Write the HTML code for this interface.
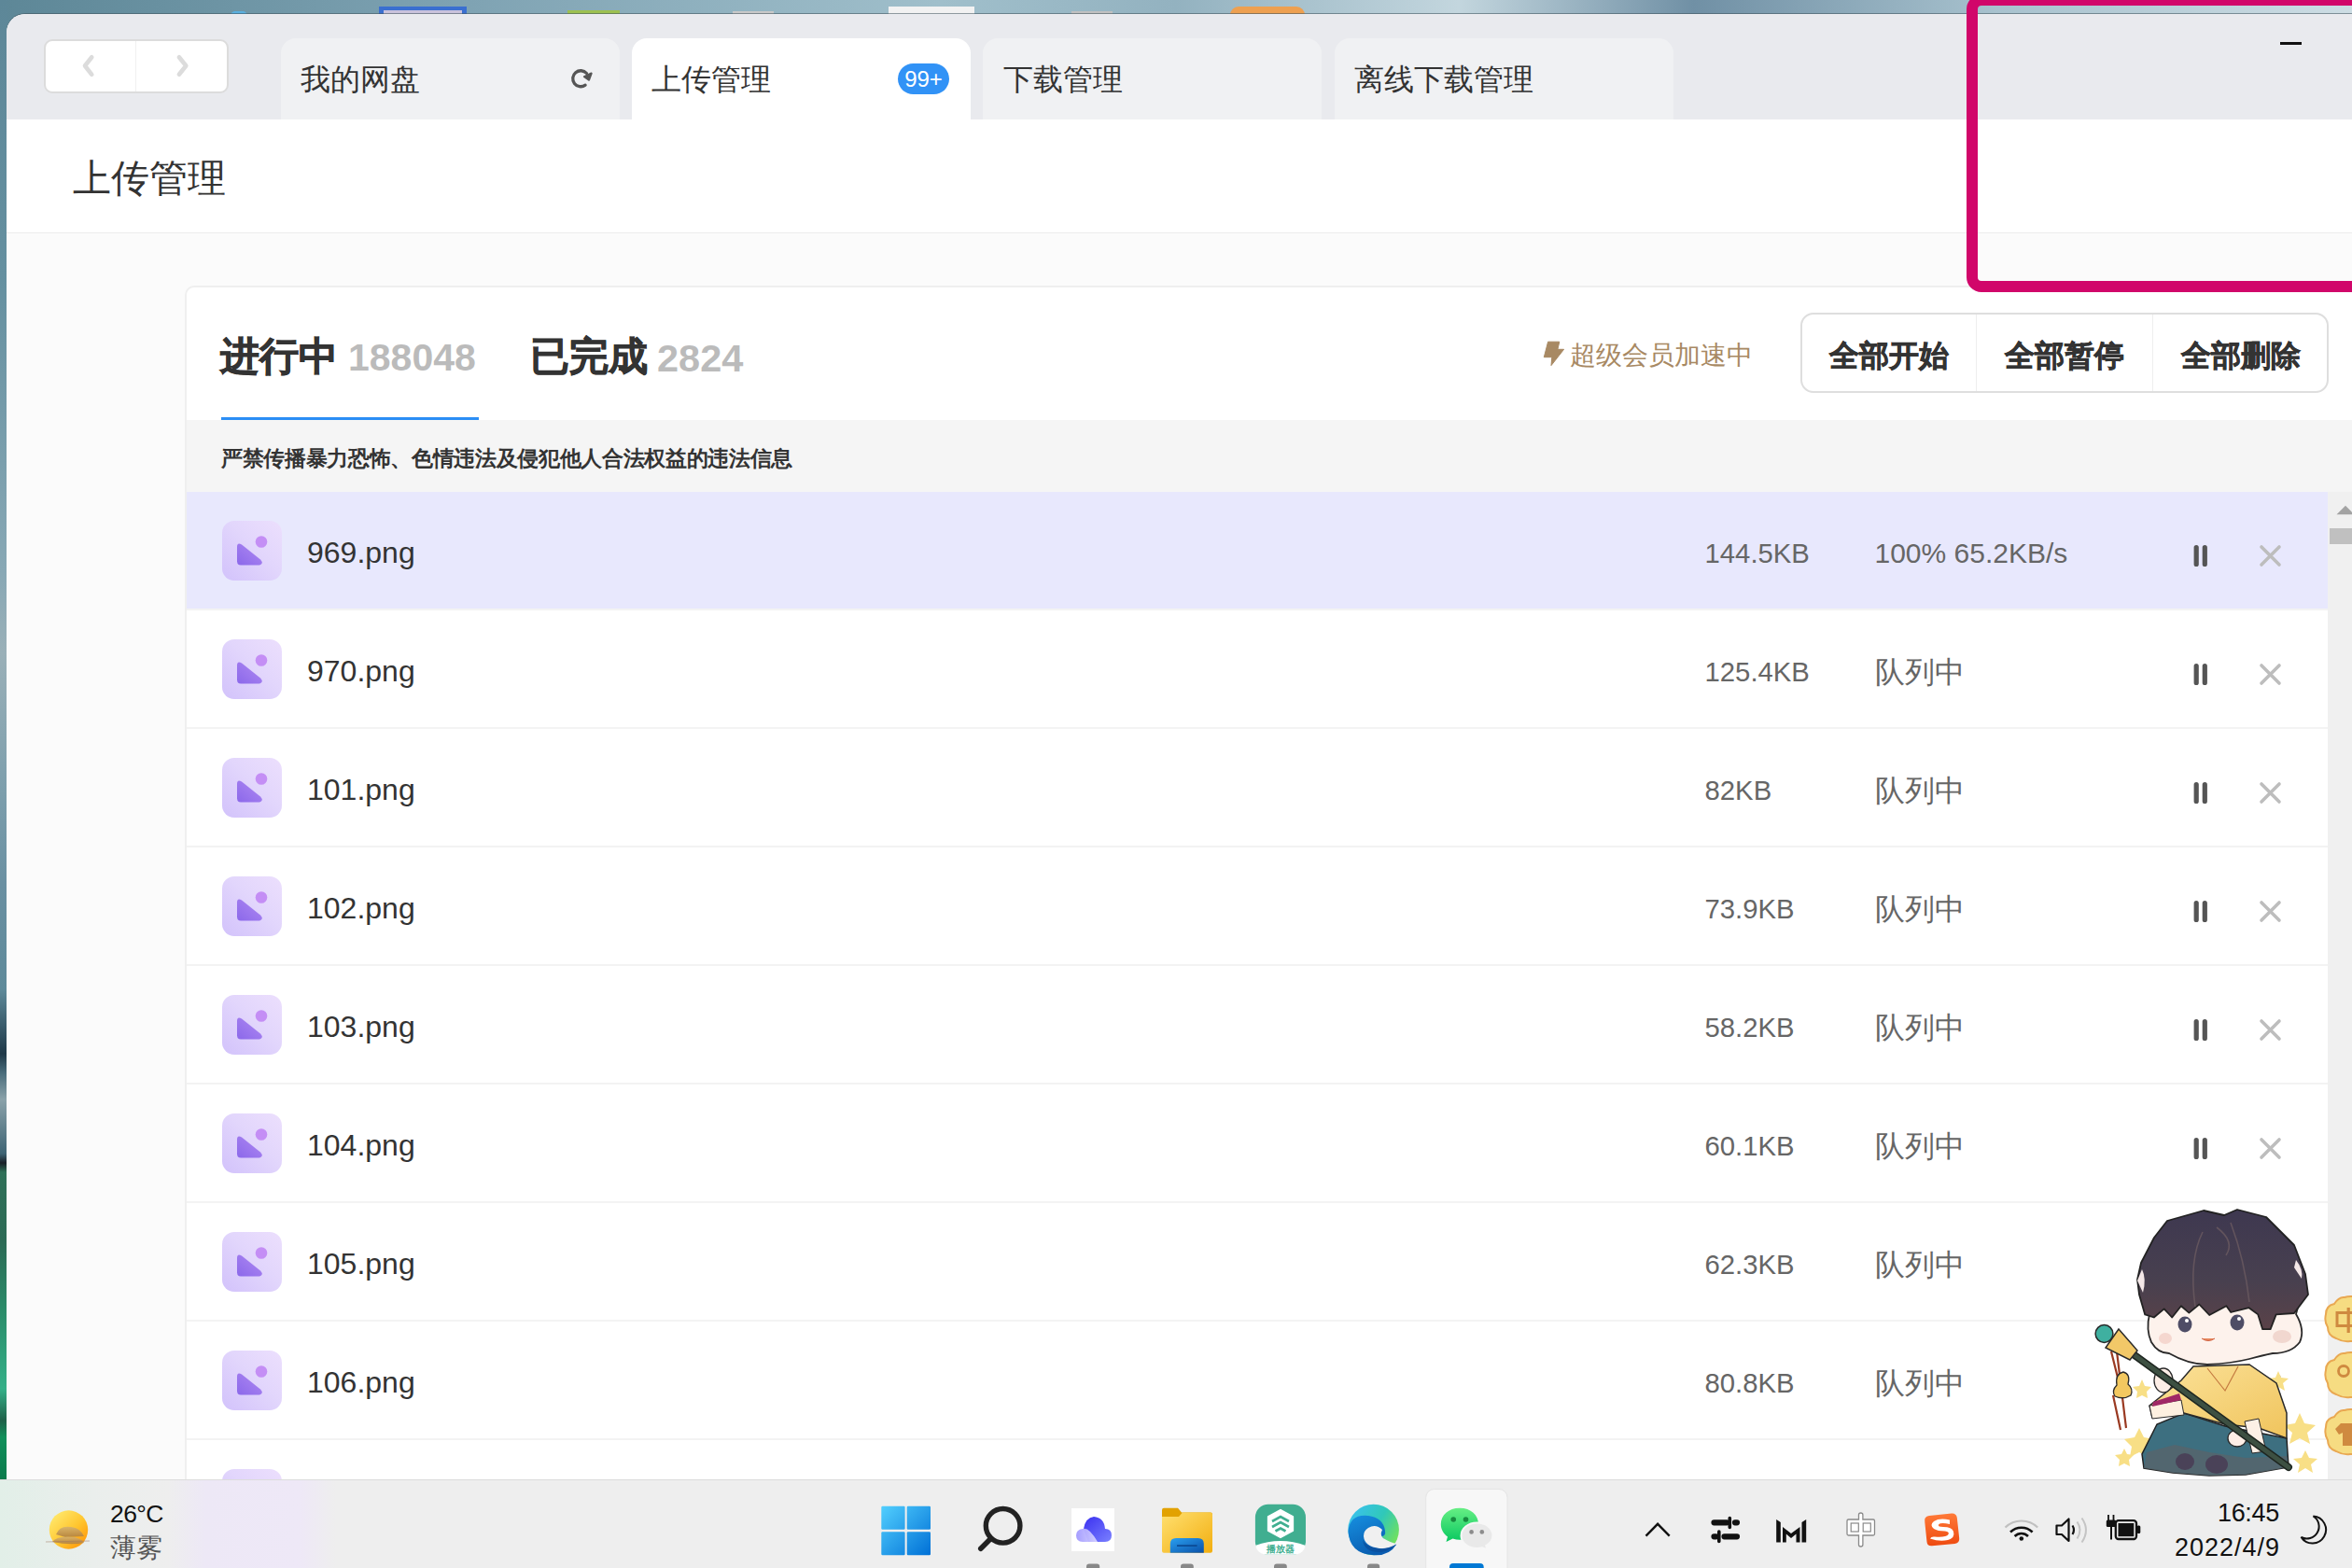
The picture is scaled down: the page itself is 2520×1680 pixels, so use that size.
<!DOCTYPE html>
<html><head><meta charset="utf-8">
<style>
*{box-sizing:border-box;margin:0;padding:0}
html,body{width:2520px;height:1680px;overflow:hidden}
body{position:relative;font-family:"Liberation Sans",sans-serif;color:#333;
 background:linear-gradient(90deg,#5d8797 0%,#7fa3b3 20%,#a0bfcb 40%,#93b2c0 50%,#c3d6de 62%,#7090a5 72%,#a8c2ce 85%,#cddde4 100%)}
.a{position:absolute}
.t{position:absolute;white-space:nowrap;line-height:1}
#leftstrip{left:0;top:0;width:8px;height:1585px;background:linear-gradient(180deg,#5d8798 0px,#6590a0 300px,#88a8b5 613px,#9ab0b8 700px,#7c9eac 850px,#6a90a2 948px,#5e8a9a 1060px,#1e3848 1129px,#4a6d7c 1150px,#8aa2aa 1178px,#3e6474 1236px,#1a2028 1246px,#2f7058 1256px,#2c6a55 1330px,#2a8a68 1400px,#34b088 1488px,#1e6048 1522px,#10905a 1540px,#0a7a4c 1585px)}
#win{left:7px;top:15px;width:2513px;height:1570px;background:#fbfbfb;border-top-left-radius:20px;overflow:hidden;box-shadow:0 -1px 0 rgba(60,80,90,.55)}
#titlebar{left:0;top:0;width:2513px;height:113px;background:#e9eaee}
#header{left:0;top:113px;width:2513px;height:122px;background:#fff;border-bottom:1px solid #ececec}
.tab{position:absolute;top:41px;width:363px;height:87px;background:#f0f1f3;border-radius:16px 16px 0 0}
.tabtxt{position:absolute;font-size:32px;color:#333;line-height:1}
#card{left:198px;top:306px;width:2400px;height:1400px;background:#fff;border:2px solid #efefef;border-radius:10px}
.row{position:absolute;left:200px;width:2294px;height:125px;background:#fff}
.sep{position:absolute;left:200px;width:2294px;height:2px;background:#f3f3f3}
.ficon{position:absolute;left:238px;width:64px;height:64px;border-radius:13px;background:linear-gradient(45deg,#d2c2fb 0%,#e2d6fc 55%,#ecdffd 100%)}
.fname{position:absolute;left:329px;font-size:32px;color:#333;line-height:1}
.fsize{position:absolute;left:1826.5px;font-size:29.3px;color:#666;line-height:1}
.fstat{position:absolute;left:2008.5px;font-size:30px;color:#666;line-height:1}
.q{font-size:32px;position:relative;top:-1px}
.btn{position:absolute;top:338px;height:86px;font-size:32px;font-weight:bold;color:#333;line-height:86px;text-align:center;-webkit-text-stroke:.6px #333}
</style></head><body>
<div id="leftstrip" class="a"></div>
<!-- desktop icons peeking at top -->
<div class="a" style="left:247px;top:12px;width:18px;height:10px;border-radius:9px;background:#5ab0e0"></div>
<div class="a" style="left:406px;top:7px;width:94px;height:9px;background:#3a6fd0"></div>
<div class="a" style="left:411px;top:11px;width:84px;height:5px;background:#c9c2dc"></div>
<div class="a" style="left:608px;top:11px;width:56px;height:5px;background:#9cc050"></div>
<div class="a" style="left:785px;top:12px;width:44px;height:4px;background:#c8c8c8"></div>
<div class="a" style="left:952px;top:7px;width:92px;height:9px;background:#f2f2f2"></div>
<div class="a" style="left:1148px;top:12px;width:44px;height:4px;background:#c0c0c0"></div>
<div class="a" style="left:1318px;top:7px;width:80px;height:9px;background:#eea050;border-radius:40px 40px 0 0"></div>

<div id="win" class="a">
 <div id="titlebar" class="a"></div>
 <div id="header" class="a"></div>
</div>
<div class="a" style="left:47px;top:42px;width:198px;height:58px;background:#fff;border:2px solid #dcdcdc;border-radius:9px"></div>
<div class="a" style="left:145px;top:44px;width:1px;height:54px;background:#f0f0f0"></div>
<svg class="a" style="left:40px;top:40px" width="200" height="60" viewBox="40 40 200 60"><path d="M98.3 61.3 L91 70.5 L98.3 79.8 M191.9 61.3 L199.3 70.5 L191.9 79.8" fill="none" stroke="#dcdcdc" stroke-width="4.6" stroke-linecap="round" stroke-linejoin="round"/></svg>
<div class="tab" style="left:300.5px"></div>
<div class="tab" style="left:676.5px;background:#fff"></div>
<div class="tab" style="left:1053px"></div>
<div class="tab" style="left:1429.5px"></div>
<div class="tabtxt" style="left:322px;top:69px">我的网盘</div>
<div class="tabtxt" style="left:698px;top:69px">上传管理</div>
<div class="tabtxt" style="left:1075px;top:69px">下载管理</div>
<div class="tabtxt" style="left:1451px;top:69px">离线下载管理</div>
<svg class="a" style="left:605px;top:65px" width="40" height="35" viewBox="605 65 40 35"><path d="M627.1 91.2 A8.5 8.5 0 1 1 628.5 78.5" fill="none" stroke="#555" stroke-width="3.3" stroke-linecap="round"/><path d="M626 82.2 L633.6 78.6 L631 85.6 Z" fill="#555" stroke="#555" stroke-width="2.2" stroke-linejoin="round"/></svg>
<div class="a" style="left:962px;top:68px;width:55px;height:33px;border-radius:17px;background:#3192f6;color:#fff;font-size:24px;line-height:33px;text-align:center">99+</div>
<div class="a" style="left:2443px;top:45px;width:23px;height:3px;background:#111"></div>
<div class="t" style="left:78px;top:171px;font-size:41px;color:#333">上传管理</div>
<div id="card" class="a"></div>
<div class="t" style="left:236px;top:361px;font-size:42px;font-weight:bold;color:#333;-webkit-text-stroke:.8px #333">进行中</div>
<div class="t" style="left:373px;top:363px;font-size:41px;font-weight:bold;color:#bbb">188048</div>
<div class="t" style="left:568px;top:361px;font-size:42px;font-weight:bold;color:#333;-webkit-text-stroke:.8px #333">已完成</div>
<div class="t" style="left:704px;top:363px;font-size:41.5px;font-weight:bold;color:#bbb">2824</div>
<div class="a" style="left:237px;top:447px;width:276px;height:5px;background:#2b8ef5"></div>
<svg class="a" style="left:1650px;top:362px" width="30" height="34" viewBox="1650 362 30 34"><path d="M1658.6 366.2 L1670.8 366.2 L1668.9 374.3 L1675.6 374.3 L1662 391.6 L1662.8 382.7 L1654.3 382.7 Z" fill="#a88963" stroke="#a88963" stroke-width="1" stroke-linejoin="round"/></svg>
<div class="t" style="left:1682px;top:367px;font-size:28px;color:#a88963">超级会员加速中</div>
<div class="a" style="left:1929px;top:335px;width:566px;height:86px;border:2px solid #dedede;border-radius:14px;background:#fff"></div>
<div class="a" style="left:2117px;top:337px;width:1px;height:82px;background:#eeeeee"></div>
<div class="a" style="left:2306px;top:337px;width:1px;height:82px;background:#eeeeee"></div>
<div class="btn" style="left:1929px;width:189px">全部开始</div>
<div class="btn" style="left:2117px;width:189px">全部暂停</div>
<div class="btn" style="left:2306px;width:189px">全部删除</div>
<div class="a" style="left:200px;top:450px;width:2320px;height:77px;background:#f5f5f5"></div>
<div class="t" style="left:237px;top:480px;font-size:23px;font-weight:bold;color:#333;letter-spacing:-.33px">严禁传播暴力恐怖、色情违法及侵犯他人合法权益的违法信息</div>

<div class="row" style="top:527px;height:125px;background:#e8e8fd"></div>
<div class="sep" style="top:652px"></div>
<div class="ficon" style="top:558px"></div>
<svg class="a" style="left:238px;top:558px" width="64" height="64" viewBox="0 0 64 64"><defs><linearGradient id="tg0" x1="0" y1="1" x2="1" y2="0"><stop offset="0" stop-color="#8b68ea"/><stop offset="1" stop-color="#b08af2"/></linearGradient></defs><path d="M16 28 Q16 22.5 21 25.5 L41 41.5 Q45 46 40 47.5 L20 47.5 Q16 47.5 16 43.5 Z" fill="url(#tg0)"/><circle cx="42" cy="22.5" r="6.3" fill="#c48ef5"/></svg>
<div class="fname" style="top:576px">969.png</div>
<div class="fsize" style="top:578px">144.5KB</div>
<div class="fstat" style="top:578px">100% 65.2KB/s</div>
<svg class="a" style="left:2340px;top:579px" width="120" height="34" viewBox="2340 579 120 34"><path d="M2353.2 586.5 V604.5 M2362.3 586.5 V604.5" stroke="#555" stroke-width="5.2" stroke-linecap="round"/><path d="M2423 586 L2442 605 M2442 586 L2423 605" stroke="#bdbdbd" stroke-width="3.6" stroke-linecap="round"/></svg>
<div class="row" style="top:654px;height:125px;background:#fff"></div>
<div class="sep" style="top:779px"></div>
<div class="ficon" style="top:685px"></div>
<svg class="a" style="left:238px;top:685px" width="64" height="64" viewBox="0 0 64 64"><defs><linearGradient id="tg1" x1="0" y1="1" x2="1" y2="0"><stop offset="0" stop-color="#8b68ea"/><stop offset="1" stop-color="#b08af2"/></linearGradient></defs><path d="M16 28 Q16 22.5 21 25.5 L41 41.5 Q45 46 40 47.5 L20 47.5 Q16 47.5 16 43.5 Z" fill="url(#tg1)"/><circle cx="42" cy="22.5" r="6.3" fill="#c48ef5"/></svg>
<div class="fname" style="top:703px">970.png</div>
<div class="fsize" style="top:705px">125.4KB</div>
<div class="fstat" style="top:705px"><span class="q">队列中</span></div>
<svg class="a" style="left:2340px;top:706px" width="120" height="34" viewBox="2340 706 120 34"><path d="M2353.2 713.5 V731.5 M2362.3 713.5 V731.5" stroke="#555" stroke-width="5.2" stroke-linecap="round"/><path d="M2423 713 L2442 732 M2442 713 L2423 732" stroke="#bdbdbd" stroke-width="3.6" stroke-linecap="round"/></svg>
<div class="row" style="top:781px;height:125px;background:#fff"></div>
<div class="sep" style="top:906px"></div>
<div class="ficon" style="top:812px"></div>
<svg class="a" style="left:238px;top:812px" width="64" height="64" viewBox="0 0 64 64"><defs><linearGradient id="tg2" x1="0" y1="1" x2="1" y2="0"><stop offset="0" stop-color="#8b68ea"/><stop offset="1" stop-color="#b08af2"/></linearGradient></defs><path d="M16 28 Q16 22.5 21 25.5 L41 41.5 Q45 46 40 47.5 L20 47.5 Q16 47.5 16 43.5 Z" fill="url(#tg2)"/><circle cx="42" cy="22.5" r="6.3" fill="#c48ef5"/></svg>
<div class="fname" style="top:830px">101.png</div>
<div class="fsize" style="top:832px">82KB</div>
<div class="fstat" style="top:832px"><span class="q">队列中</span></div>
<svg class="a" style="left:2340px;top:833px" width="120" height="34" viewBox="2340 833 120 34"><path d="M2353.2 840.5 V858.5 M2362.3 840.5 V858.5" stroke="#555" stroke-width="5.2" stroke-linecap="round"/><path d="M2423 840 L2442 859 M2442 840 L2423 859" stroke="#bdbdbd" stroke-width="3.6" stroke-linecap="round"/></svg>
<div class="row" style="top:908px;height:125px;background:#fff"></div>
<div class="sep" style="top:1033px"></div>
<div class="ficon" style="top:939px"></div>
<svg class="a" style="left:238px;top:939px" width="64" height="64" viewBox="0 0 64 64"><defs><linearGradient id="tg3" x1="0" y1="1" x2="1" y2="0"><stop offset="0" stop-color="#8b68ea"/><stop offset="1" stop-color="#b08af2"/></linearGradient></defs><path d="M16 28 Q16 22.5 21 25.5 L41 41.5 Q45 46 40 47.5 L20 47.5 Q16 47.5 16 43.5 Z" fill="url(#tg3)"/><circle cx="42" cy="22.5" r="6.3" fill="#c48ef5"/></svg>
<div class="fname" style="top:957px">102.png</div>
<div class="fsize" style="top:959px">73.9KB</div>
<div class="fstat" style="top:959px"><span class="q">队列中</span></div>
<svg class="a" style="left:2340px;top:960px" width="120" height="34" viewBox="2340 960 120 34"><path d="M2353.2 967.5 V985.5 M2362.3 967.5 V985.5" stroke="#555" stroke-width="5.2" stroke-linecap="round"/><path d="M2423 967 L2442 986 M2442 967 L2423 986" stroke="#bdbdbd" stroke-width="3.6" stroke-linecap="round"/></svg>
<div class="row" style="top:1035px;height:125px;background:#fff"></div>
<div class="sep" style="top:1160px"></div>
<div class="ficon" style="top:1066px"></div>
<svg class="a" style="left:238px;top:1066px" width="64" height="64" viewBox="0 0 64 64"><defs><linearGradient id="tg4" x1="0" y1="1" x2="1" y2="0"><stop offset="0" stop-color="#8b68ea"/><stop offset="1" stop-color="#b08af2"/></linearGradient></defs><path d="M16 28 Q16 22.5 21 25.5 L41 41.5 Q45 46 40 47.5 L20 47.5 Q16 47.5 16 43.5 Z" fill="url(#tg4)"/><circle cx="42" cy="22.5" r="6.3" fill="#c48ef5"/></svg>
<div class="fname" style="top:1084px">103.png</div>
<div class="fsize" style="top:1086px">58.2KB</div>
<div class="fstat" style="top:1086px"><span class="q">队列中</span></div>
<svg class="a" style="left:2340px;top:1087px" width="120" height="34" viewBox="2340 1087 120 34"><path d="M2353.2 1094.5 V1112.5 M2362.3 1094.5 V1112.5" stroke="#555" stroke-width="5.2" stroke-linecap="round"/><path d="M2423 1094 L2442 1113 M2442 1094 L2423 1113" stroke="#bdbdbd" stroke-width="3.6" stroke-linecap="round"/></svg>
<div class="row" style="top:1162px;height:125px;background:#fff"></div>
<div class="sep" style="top:1287px"></div>
<div class="ficon" style="top:1193px"></div>
<svg class="a" style="left:238px;top:1193px" width="64" height="64" viewBox="0 0 64 64"><defs><linearGradient id="tg5" x1="0" y1="1" x2="1" y2="0"><stop offset="0" stop-color="#8b68ea"/><stop offset="1" stop-color="#b08af2"/></linearGradient></defs><path d="M16 28 Q16 22.5 21 25.5 L41 41.5 Q45 46 40 47.5 L20 47.5 Q16 47.5 16 43.5 Z" fill="url(#tg5)"/><circle cx="42" cy="22.5" r="6.3" fill="#c48ef5"/></svg>
<div class="fname" style="top:1211px">104.png</div>
<div class="fsize" style="top:1213px">60.1KB</div>
<div class="fstat" style="top:1213px"><span class="q">队列中</span></div>
<svg class="a" style="left:2340px;top:1214px" width="120" height="34" viewBox="2340 1214 120 34"><path d="M2353.2 1221.5 V1239.5 M2362.3 1221.5 V1239.5" stroke="#555" stroke-width="5.2" stroke-linecap="round"/><path d="M2423 1221 L2442 1240 M2442 1221 L2423 1240" stroke="#bdbdbd" stroke-width="3.6" stroke-linecap="round"/></svg>
<div class="row" style="top:1289px;height:125px;background:#fff"></div>
<div class="sep" style="top:1414px"></div>
<div class="ficon" style="top:1320px"></div>
<svg class="a" style="left:238px;top:1320px" width="64" height="64" viewBox="0 0 64 64"><defs><linearGradient id="tg6" x1="0" y1="1" x2="1" y2="0"><stop offset="0" stop-color="#8b68ea"/><stop offset="1" stop-color="#b08af2"/></linearGradient></defs><path d="M16 28 Q16 22.5 21 25.5 L41 41.5 Q45 46 40 47.5 L20 47.5 Q16 47.5 16 43.5 Z" fill="url(#tg6)"/><circle cx="42" cy="22.5" r="6.3" fill="#c48ef5"/></svg>
<div class="fname" style="top:1338px">105.png</div>
<div class="fsize" style="top:1340px">62.3KB</div>
<div class="fstat" style="top:1340px"><span class="q">队列中</span></div>
<svg class="a" style="left:2340px;top:1341px" width="120" height="34" viewBox="2340 1341 120 34"><path d="M2353.2 1348.5 V1366.5 M2362.3 1348.5 V1366.5" stroke="#555" stroke-width="5.2" stroke-linecap="round"/><path d="M2423 1348 L2442 1367 M2442 1348 L2423 1367" stroke="#bdbdbd" stroke-width="3.6" stroke-linecap="round"/></svg>
<div class="row" style="top:1416px;height:125px;background:#fff"></div>
<div class="sep" style="top:1541px"></div>
<div class="ficon" style="top:1447px"></div>
<svg class="a" style="left:238px;top:1447px" width="64" height="64" viewBox="0 0 64 64"><defs><linearGradient id="tg7" x1="0" y1="1" x2="1" y2="0"><stop offset="0" stop-color="#8b68ea"/><stop offset="1" stop-color="#b08af2"/></linearGradient></defs><path d="M16 28 Q16 22.5 21 25.5 L41 41.5 Q45 46 40 47.5 L20 47.5 Q16 47.5 16 43.5 Z" fill="url(#tg7)"/><circle cx="42" cy="22.5" r="6.3" fill="#c48ef5"/></svg>
<div class="fname" style="top:1465px">106.png</div>
<div class="fsize" style="top:1467px">80.8KB</div>
<div class="fstat" style="top:1467px"><span class="q">队列中</span></div>
<svg class="a" style="left:2340px;top:1468px" width="120" height="34" viewBox="2340 1468 120 34"><path d="M2353.2 1475.5 V1493.5 M2362.3 1475.5 V1493.5" stroke="#555" stroke-width="5.2" stroke-linecap="round"/><path d="M2423 1475 L2442 1494 M2442 1475 L2423 1494" stroke="#bdbdbd" stroke-width="3.6" stroke-linecap="round"/></svg>
<div class="row" style="top:1543px;height:125px;background:#fff"></div>
<div class="sep" style="top:1668px"></div>
<div class="ficon" style="top:1574px"></div>
<svg class="a" style="left:238px;top:1574px" width="64" height="64" viewBox="0 0 64 64"><defs><linearGradient id="tg8" x1="0" y1="1" x2="1" y2="0"><stop offset="0" stop-color="#8b68ea"/><stop offset="1" stop-color="#b08af2"/></linearGradient></defs><path d="M16 28 Q16 22.5 21 25.5 L41 41.5 Q45 46 40 47.5 L20 47.5 Q16 47.5 16 43.5 Z" fill="url(#tg8)"/><circle cx="42" cy="22.5" r="6.3" fill="#c48ef5"/></svg>
<div class="a" style="left:2494px;top:527px;width:26px;height:1058px;background:#f0f0f0"></div>
<svg class="a" style="left:2494px;top:527px" width="26" height="60" viewBox="2494 527 26 60"><path d="M2503.5 551.3 L2513 541.8 L2522.5 551.3 Z" fill="#a3a3a3"/></svg>
<div class="a" style="left:2496px;top:566px;width:24px;height:17px;background:#c0c0c0"></div>

<div class="a" style="left:2107px;top:-6px;width:460px;height:319px;border:12.6px solid #d1066a;border-radius:16px"></div>


<!-- CHARACTER -->
<svg class="a" style="left:2230px;top:1285px" width="290" height="300" viewBox="2230 1285 290 300">
 <defs>
  <linearGradient id="hair" x1="0" y1="0" x2="0" y2="1"><stop offset="0" stop-color="#3e3850"/><stop offset=".6" stop-color="#48404f"/><stop offset="1" stop-color="#5a4248"/></linearGradient>
  <linearGradient id="robe" x1="0" y1="0" x2="1" y2="1"><stop offset="0" stop-color="#fbe29a"/><stop offset="1" stop-color="#f0c45c"/></linearGradient>
 </defs>
 <!-- stars -->
 <g fill="#f8df86">
  <path d="M2295 1478 L2298 1485 L2305 1486 L2300 1491 L2301 1498 L2295 1495 L2289 1498 L2290 1491 L2285 1486 L2292 1485 Z"/>
  <path d="M2292 1530 L2297 1540 L2308 1542 L2300 1550 L2302 1561 L2292 1556 L2282 1561 L2284 1550 L2276 1542 L2287 1540 Z"/>
  <path d="M2276 1552 L2279 1558 L2286 1559 L2281 1564 L2282 1571 L2276 1568 L2270 1571 L2271 1564 L2266 1559 L2273 1558 Z"/>
  <path d="M2441 1469 L2444 1476 L2452 1477 L2446 1482 L2448 1490 L2441 1486 L2434 1490 L2436 1482 L2430 1477 L2438 1476 Z"/>
  <path d="M2464 1514 L2469 1525 L2481 1527 L2472 1535 L2475 1547 L2464 1541 L2453 1547 L2456 1535 L2447 1527 L2459 1525 Z"/>
  <path d="M2470 1554 L2474 1562 L2483 1563 L2476 1569 L2478 1578 L2470 1573 L2462 1578 L2464 1569 L2457 1563 L2466 1562 Z"/>
 </g>
 <!-- pants -->
 <path d="M2306 1536 L2311 1526 L2340 1514 L2384 1528 L2450 1541 L2452 1572 L2406 1580 L2367 1581 L2328 1578 L2297 1573 L2295 1558 Z" fill="#3d6f80" stroke="#222" stroke-width="1.5"/>
 <path d="M2297 1573 L2300 1556 L2330 1548 L2367 1556 L2406 1562 L2450 1560 L2452 1572 L2406 1580 L2367 1581 L2328 1578 Z" fill="#56656c" opacity=".85"/>
 <ellipse cx="2341" cy="1566" rx="10" ry="9" fill="#4a4258"/>
 <ellipse cx="2375" cy="1569" rx="12" ry="10" fill="#4a4258"/>
 <!-- robe -->
 <path d="M2350 1464 L2410 1462 L2439 1482 L2450 1514 L2450 1541 L2420 1530 L2384 1526 L2340 1514 L2306 1519 L2303 1506 L2337 1479 Z" fill="url(#robe)" stroke="#2a2a2a" stroke-width="1.5"/>
 <path d="M2365 1466 L2384 1490 L2398 1464" fill="none" stroke="#c47a40" stroke-width="1.2"/>
 <path d="M2303 1506 L2337 1500 L2340 1516 L2306 1520 Z" fill="#fdf0e0" stroke="#2a2a2a" stroke-width="1"/>
 <path d="M2307 1502 L2335 1493 L2337 1500 L2306 1507 Z" fill="#a02866"/>
 <path d="M2405 1523 L2420 1520 L2428 1555 L2413 1557 Z" fill="#fdf0e6" stroke="#2a2a2a" stroke-width="1"/>
 <!-- hands -->
 <ellipse cx="2318" cy="1479" rx="10" ry="13" fill="#fdeee6" stroke="#2a2a2a" stroke-width="1.3"/>
 <ellipse cx="2397" cy="1541" rx="10" ry="9" fill="#fdeee6" stroke="#2a2a2a" stroke-width="1.3"/>
 <!-- staff -->
 <path d="M2287 1452 L2452 1572" stroke="#1e2620" stroke-width="8" stroke-linecap="round"/>
 <path d="M2287 1452 L2452 1572" stroke="#3d5042" stroke-width="5" stroke-linecap="round"/>
 <path d="M2262 1448 L2270 1480 M2268 1448 L2278 1530 M2264 1495 L2272 1532" stroke="#9a3a22" stroke-width="2.2"/>
 <path d="M2275 1470 Q2266 1472 2268 1484 Q2262 1490 2266 1496 Q2275 1500 2283 1495 Q2286 1488 2280 1483 Q2283 1472 2275 1470 Z" fill="#f3c860" stroke="#2a2a2a" stroke-width="1.3"/>
 <path d="M2270 1424 L2290 1447 L2282 1457 L2256 1444 Z" fill="#f2c868" stroke="#2a2a2a" stroke-width="1.5"/>
 <circle cx="2254.5" cy="1429" r="9.4" fill="#3fb0a0" stroke="#2a2a2a" stroke-width="1.5"/>
 <!-- face -->
 <path d="M2298 1390 L2303 1408 Q2299 1425 2305 1438 Q2312 1450 2324 1450 Q2345 1462 2365 1462 Q2390 1461 2410 1456 Q2425 1452 2435 1450 Q2455 1450 2464 1438 Q2470 1425 2460 1408 L2465 1390 Z" fill="#fdf2ec" stroke="#2a2a2a" stroke-width="1.8"/>
 <ellipse cx="2320" cy="1434" rx="7" ry="6" fill="#f2d0c8" opacity=".8"/>
 <ellipse cx="2445" cy="1432" rx="10" ry="7" fill="#eed0c8" opacity=".8"/>
 <ellipse cx="2341" cy="1419" rx="7.5" ry="8.5" fill="#4e4d66"/>
 <ellipse cx="2397" cy="1417" rx="7.5" ry="8.5" fill="#4e4d66"/>
 <circle cx="2343" cy="1415" r="2" fill="#fff"/>
 <circle cx="2399" cy="1413" r="2" fill="#fff"/>
 <path d="M2359 1434 Q2366 1439 2373 1434" fill="#e88a60" stroke="#d06040" stroke-width="1"/>
 <!-- hair -->
 <path d="M2322 1308 L2361 1297 L2383 1302 L2397 1296 L2428 1304 L2458 1334 L2470 1365 L2473 1387 L2458 1407 L2438.7 1408.4 L2432.6 1424.2 L2424.2 1424.2 L2419.3 1408.4 L2409.6 1401.2 L2390.2 1406 L2385.4 1399.3 L2367.2 1409 L2356.3 1397.5 L2345.4 1406.6 L2336.9 1399.3 L2327.2 1411.5 L2318.7 1402.4 L2307.8 1411.5 L2298.2 1408.4 L2292 1387 L2290 1371 L2294 1353 L2308 1326 Z" fill="url(#hair)" stroke="#222" stroke-width="1.8" stroke-linejoin="round"/>
 <path d="M2295 1360 Q2300 1370 2296 1385 L2290 1372 Z" fill="#f4e8e8"/>
 <path d="M2460 1350 Q2468 1360 2466 1370 L2458 1358 Z" fill="#f4e8e8"/>
 <path d="M2360 1320 Q2345 1350 2352 1400 M2390 1310 Q2405 1350 2410 1395 M2375 1315 Q2395 1330 2385 1345" fill="none" stroke="#6a5a60" stroke-width="1.6" opacity=".8"/>
</svg>
<!-- flower badges -->
<svg class="a" style="left:2485px;top:1385px" width="35" height="180" viewBox="2485 1385 35 180">
 <g fill="#f6dc82" stroke="#e9a852" stroke-width="2">
  <path d="M2526 1390 Q2518 1388 2512 1390 Q2506 1389 2501 1397 Q2492 1399 2492 1408 Q2490 1416 2494 1422 Q2494 1431 2503 1434 Q2510 1438 2518 1437 L2526 1437 Z"/>
  <path d="M2526 1450 Q2518 1448 2512 1450 Q2506 1449 2501 1457 Q2492 1459 2492 1468 Q2490 1476 2494 1482 Q2494 1491 2503 1494 Q2510 1498 2518 1497 L2526 1497 Z"/>
  <path d="M2526 1511 Q2518 1509 2512 1511 Q2506 1510 2501 1518 Q2492 1520 2492 1529 Q2490 1537 2494 1543 Q2494 1552 2503 1555 Q2510 1559 2518 1558 L2526 1558 Z"/>
 </g>
 <rect x="2504" y="1406.5" width="20" height="14" fill="none" stroke="#cf8a40" stroke-width="3"/>
 <path d="M2516.2 1401 V1428" stroke="#cf8a40" stroke-width="3.2"/>
 <circle cx="2511" cy="1469" r="5.5" fill="none" stroke="#cf8a40" stroke-width="2.8"/>
 <path d="M2502 1531 L2508 1525 L2522 1525 L2522 1549 L2510 1549 L2510 1535 L2506 1537 Z" fill="#cf8a40"/>
</svg>

<!-- TASKBAR -->
<div class="a" style="left:0;top:1585px;width:2520px;height:95px;background:linear-gradient(90deg,#e2efe8 0px,#eaeeec 100px,#eeeeee 180px,#ede8f6 220px,#eee8f7 320px,#eeeeee 360px,#eeeeee 100%);border-top:1px solid #dcdcdc"></div>
<svg class="a" style="left:40px;top:1605px" width="70" height="70" viewBox="40 1605 70 70">
 <defs><linearGradient id="sun" x1="0" y1="0" x2="1" y2="1"><stop offset="0" stop-color="#fff07a"/><stop offset=".55" stop-color="#ffc630"/><stop offset="1" stop-color="#ff8c00"/></linearGradient>
 <linearGradient id="cl" x1="0" y1="0" x2="0" y2="1"><stop offset="0" stop-color="#d4b070" stop-opacity=".85"/><stop offset="1" stop-color="#b08040" stop-opacity=".9"/></linearGradient></defs>
 <circle cx="73.5" cy="1639" r="20.7" fill="url(#sun)"/>
 <path d="M60 1644 Q64 1634 76 1636 Q86 1637 90 1646 L70 1647 Z" fill="url(#cl)"/>
 <path d="M56 1652 Q62 1645 80 1647 Q88 1649 90 1653 Q75 1656 56 1652 Z" fill="url(#cl)"/>
 <path d="M49 1652 L96 1651" stroke="#a07860" stroke-width="1" opacity=".5"/>
</svg>
<div class="t" style="left:118px;top:1609px;font-size:26.5px;color:#111;letter-spacing:-.6px">26°C</div>
<div class="t" style="left:118px;top:1645px;font-size:28px;color:#555">薄雾</div>

<svg class="a" style="left:930px;top:1595px" width="700" height="85" viewBox="930 1595 700 85">
 <defs>
  <linearGradient id="wlogo" gradientUnits="userSpaceOnUse" x1="944" y1="1614" x2="997" y2="1666"><stop offset="0" stop-color="#52cffe"/><stop offset="1" stop-color="#0070d6"/></linearGradient>
  <linearGradient id="cld1" x1="0" y1="0" x2="1" y2="1"><stop offset="0" stop-color="#3a30f0"/><stop offset="1" stop-color="#7a80ff"/></linearGradient>
  <linearGradient id="cld2" x1="0" y1="0" x2="1" y2="0"><stop offset="0" stop-color="#a098ff"/><stop offset="1" stop-color="#d8d4ff"/></linearGradient>
  <linearGradient id="fold" x1="0" y1="0" x2="1" y2="1"><stop offset="0" stop-color="#ffe070"/><stop offset="1" stop-color="#f2ae10"/></linearGradient>
  <linearGradient id="foldb" x1="0" y1="0" x2="1" y2="1"><stop offset="0" stop-color="#2aa0f0"/><stop offset="1" stop-color="#0a50a8"/></linearGradient>
  <linearGradient id="edge1" x1="0" y1="0" x2="1" y2="0.6"><stop offset="0" stop-color="#3cc0f8"/><stop offset=".6" stop-color="#30c8b8"/><stop offset="1" stop-color="#70e060"/></linearGradient>
  <linearGradient id="edge2" x1="0" y1="0" x2="0.5" y2="1"><stop offset="0" stop-color="#1690e0"/><stop offset="1" stop-color="#0a5cb0"/></linearGradient>
  <linearGradient id="wx" x1="0" y1="0" x2="0" y2="1"><stop offset="0" stop-color="#66ee84"/><stop offset="1" stop-color="#08c860"/></linearGradient>
 </defs>
 <!-- windows -->
 <rect x="944.3" y="1613.8" width="25.3" height="25" rx="1.2" fill="url(#wlogo)"/>
 <rect x="971.7" y="1613.8" width="25.3" height="25" rx="1.2" fill="url(#wlogo)"/>
 <rect x="944.3" y="1641.2" width="25.3" height="25" rx="1.2" fill="url(#wlogo)"/>
 <rect x="971.7" y="1641.2" width="25.3" height="25" rx="1.2" fill="url(#wlogo)"/>
 <!-- search -->
 <circle cx="1074.6" cy="1634.8" r="18.3" fill="none" stroke="#222" stroke-width="5.4"/>
 <path d="M1061.5 1648.5 L1050.8 1659.2" stroke="#222" stroke-width="5.6" stroke-linecap="round"/>
 <!-- cloud app -->
 <rect x="1148" y="1616" width="46" height="46" fill="#fff"/>
 <path d="M1166 1652 L1184 1652 Q1191 1652 1191 1645 Q1191 1638 1184 1638 Q1183 1626 1172 1625 Q1163 1626 1161 1638 Z" fill="url(#cld1)"/>
 <path d="M1160 1652 L1176 1652 Q1172 1645 1168 1641 Q1164 1637 1160 1638 Q1153 1639 1153 1645 Q1153 1652 1160 1652 Z" fill="url(#cld2)" opacity=".95"/>
 <rect x="1164" y="1675.4" width="14.2" height="8" rx="3" fill="#888"/>
 <!-- folder -->
 <path d="M1245 1618 Q1245 1615.8 1247 1615.8 L1262 1615.8 L1266 1620.6 L1297 1620.6 Q1299 1620.6 1299 1623 L1299 1627 L1245 1627 Z" fill="#e2a200"/>
 <path d="M1245 1625 L1263 1625 L1267 1620.6 L1297 1620.6 Q1299 1620.6 1299 1623 L1299 1661.8 Q1299 1663.8 1297 1663.8 L1247 1663.8 Q1245 1663.8 1245 1661.8 Z" fill="url(#fold)"/>
 <path d="M1253.8 1663.8 L1253.8 1654 Q1253.8 1648 1260 1648 L1283.6 1648 Q1289.8 1648 1289.8 1654 L1289.8 1663.8 Z" fill="url(#foldb)"/>
 <rect x="1261" y="1655.3" width="21.6" height="1.6" fill="#0a4890"/>
 <rect x="1265" y="1675.4" width="13.8" height="8" rx="3" fill="#888"/>
 <!-- green player -->
 <rect x="1344.9" y="1611.7" width="54.1" height="54.1" rx="14" fill="#40ae90"/>
 <path d="M1344.9 1656 Q1372 1646 1399 1656 L1399 1652 Q1399 1665.8 1385 1665.8 L1359 1665.8 Q1344.9 1665.8 1344.9 1652 Z" fill="#fff"/>
 <path d="M1372 1617.6 L1385.4 1625 L1385.4 1640 L1372 1647.4 L1358.6 1640 L1358.6 1625 Z" fill="#fff" stroke="#fff" stroke-width="1.5" stroke-linejoin="round"/>
 <path d="M1363 1630 L1372 1625 L1381 1630 M1363 1636 L1372 1631 L1381 1636 M1366.5 1640.5 L1372 1637.5 L1377.5 1640.5" fill="none" stroke="#40ae90" stroke-width="2.6"/>
 <text x="1372" y="1663" font-size="9.5" font-weight="bold" fill="#40ae90" text-anchor="middle">播放器</text>
 <rect x="1365" y="1675.4" width="13.8" height="8" rx="3" fill="#888"/>
 <!-- edge -->
 <circle cx="1471.6" cy="1639" r="27.3" fill="url(#edge1)"/>
 <path d="M1444.5 1641 Q1446 1622 1466 1624 Q1482 1626 1484 1640 Q1485 1646 1480 1646 Q1490 1656 1496 1655 Q1488 1668 1470 1666 Q1446 1664 1444.5 1641 Z" fill="url(#edge2)"/>
 <path d="M1466 1637 Q1474 1632 1481 1639 Q1478 1645 1482 1648 Q1490 1653 1496.5 1654 Q1490 1660 1478 1659 Q1462 1657 1461 1646 Q1461 1640 1466 1637 Z" fill="#f0f0f0"/>
 <path d="M1460 1650 Q1462 1664 1480 1663 Q1491 1661 1496.5 1654 Q1488 1660 1476 1659 Q1463 1657 1460 1650 Z" fill="#0c4c98" opacity=".7"/>
 <rect x="1465" y="1675.4" width="13.2" height="8" rx="3" fill="#888"/>
 <!-- wechat active -->
 <rect x="1527.7" y="1595.5" width="87.3" height="100" rx="9" fill="#f7f7f7" stroke="#e4e4e4" stroke-width="1"/>
 <path d="M1564 1615.8 C1552 1615.8 1543.8 1623.5 1543.8 1633 C1543.8 1638.5 1546.5 1643 1551 1646.5 L1549.5 1652 L1556.5 1648.5 C1559 1649.2 1561.5 1649.8 1564 1649.8 C1576 1649.8 1584 1642 1584 1633 C1584 1623.5 1576 1615.8 1564 1615.8 Z" fill="url(#wx)"/>
 <circle cx="1557.2" cy="1628" r="2.8" fill="#188a40"/>
 <circle cx="1570.5" cy="1628" r="2.8" fill="#188a40"/>
 <path d="M1582.5 1631.5 C1573 1631.5 1565.5 1637.5 1565.5 1645.5 C1565.5 1653 1573 1659 1582.5 1659 C1584.5 1659 1586.5 1658.8 1588.2 1658.2 L1593.5 1660.5 L1592.2 1656 C1596.5 1653.5 1599.5 1649.8 1599.5 1645.5 C1599.5 1637.5 1592 1631.5 1582.5 1631.5 Z" fill="#e9e9e9" stroke="#f7f7f7" stroke-width="2"/>
 <circle cx="1576.6" cy="1641.4" r="2.3" fill="#8c8c8c"/>
 <circle cx="1587.8" cy="1641.4" r="2.3" fill="#8c8c8c"/>
 <rect x="1553" y="1675" width="36.7" height="10" rx="4" fill="#0078d4"/>
</svg>

<svg class="a" style="left:1740px;top:1600px" width="780" height="80" viewBox="1740 1600 780 80">
 <defs><linearGradient id="sg" x1="0" y1="0" x2="0" y2="1"><stop offset="0" stop-color="#ff7a38"/><stop offset="1" stop-color="#ee4a10"/></linearGradient></defs>
 <path d="M1763.5 1645.6 L1776.1 1632.8 L1788.7 1645.6" fill="none" stroke="#111" stroke-width="2.4"/>
 <path d="M1836.5 1631.3 H1850 M1859 1631.3 H1861 M1836.5 1646.3 H1838.5 M1847.5 1646.3 H1861" stroke="#111" stroke-width="6.2" stroke-linecap="round"/>
 <path d="M1853.3 1626.5 V1636.5 M1841.8 1641 V1651.5" stroke="#111" stroke-width="3.6" stroke-linecap="round"/>
 <path d="M1903.2 1628 L1907.8 1631 L1907.8 1652.5 L1903.2 1652.5 Z M1910 1636 L1919 1643 L1928.5 1636 L1928.5 1652.5 L1924.5 1652.5 L1924.5 1643.5 L1919 1648 L1913.8 1643.5 L1913.8 1652.5 L1910 1652.5 Z M1930.5 1631 L1935.2 1628 L1935.2 1652.5 L1930.5 1652.5 Z" fill="#111"/>
 <path d="M1991.5 1623 Q1991.5 1621 1993.7 1621 Q1995.9 1621 1995.9 1623 L1995.9 1628 L2007 1628 Q2008.5 1628 2008.5 1629.5 L2008.5 1643.5 Q2008.5 1645 2007 1645 L1995.9 1645 L1995.9 1655 Q1995.9 1657 1993.7 1657 Q1991.5 1657 1991.5 1655 L1991.5 1645 L1980.5 1645 Q1979 1645 1979 1643.5 L1979 1629.5 Q1979 1628 1980.5 1628 L1991.5 1628 Z" fill="#fff" stroke="#8a8a8a" stroke-width="1.3"/>
 <rect x="1983.2" y="1632" width="8.1" height="9" fill="none" stroke="#8a8a8a" stroke-width="1.2"/><rect x="1996.2" y="1632" width="8.1" height="9" fill="none" stroke="#8a8a8a" stroke-width="1.2"/>
 <path d="M2062.3 1631 Q2061 1625 2067 1624 L2091 1621.5 Q2096 1621.2 2096.8 1626 L2099.2 1648 Q2099.8 1653 2094.5 1654 L2070 1656.3 Q2065 1656.8 2064.5 1652 Z" fill="url(#sg)"/>
 <path d="M2089 1628.5 Q2078 1626 2072 1630 Q2067 1634 2072 1638 Q2076 1640.5 2084 1640.5 Q2089 1641 2087.5 1644 Q2085 1647.5 2073 1646.5 Q2069 1646 2068 1648.5 Q2078 1652 2087 1650 Q2095 1647.5 2093 1641 Q2091.5 1636 2082 1636 Q2076 1636 2077 1633.5 Q2079 1631 2089 1633 Z" fill="#fff"/>
 <!-- wifi -->
 <path d="M2148.5 1636.5 A25 25 0 0 1 2183.2 1636.5" fill="none" stroke="#c0c0c0" stroke-width="2.2"/>
 <path d="M2154 1641.5 A17 17 0 0 1 2177.6 1641.5" fill="none" stroke="#111" stroke-width="2.6"/>
 <path d="M2158.6 1646 A10 10 0 0 1 2173 1646" fill="none" stroke="#111" stroke-width="2.6"/>
 <circle cx="2165.8" cy="1648.5" r="2.3" fill="#111"/>
 <!-- volume -->
 <path d="M2203.5 1634.5 L2209 1634.5 L2216.5 1627.5 L2216.5 1651 L2209 1644 L2203.5 1644 Z" fill="none" stroke="#111" stroke-width="2.2" stroke-linejoin="round"/>
 <path d="M2220.5 1634.5 Q2223.5 1639.3 2220.5 1644" fill="none" stroke="#111" stroke-width="2.2"/>
 <path d="M2225.5 1630.5 Q2231.5 1639.3 2225.5 1648.5 M2230.5 1626.5 Q2239.5 1639.3 2230.5 1652.5" fill="none" stroke="#c4c4c4" stroke-width="2"/>
 <!-- battery -->
 <path d="M2259 1623 V1630 M2264.5 1623 V1630" stroke="#111" stroke-width="1.8"/>
 <rect x="2256.8" y="1628.5" width="10.3" height="7.5" rx="1.5" fill="#111"/>
 <path d="M2262 1636 V1649.5" stroke="#111" stroke-width="2"/>
 <rect x="2266.8" y="1629.2" width="22.2" height="19.8" rx="3" fill="none" stroke="#111" stroke-width="2.3"/>
 <rect x="2269.5" y="1632" width="16.8" height="14.2" fill="#111"/>
 <rect x="2289.5" y="1634.5" width="3.8" height="8.5" rx="1.5" fill="#111"/>
 <!-- moon -->
 <path d="M2478.5 1624.5 A14.5 14.5 0 1 1 2465.5 1647 A13 13 0 0 0 2478.5 1624.5 Z" fill="none" stroke="#111" stroke-width="2"/>
</svg>
<div class="t" style="right:78px;top:1607.5px;font-size:27px;color:#111;text-align:right;letter-spacing:-.3px">16:45</div>
<div class="t" style="right:77px;top:1644.5px;font-size:27px;color:#111;text-align:right;letter-spacing:1px">2022/4/9</div>

</body></html>
